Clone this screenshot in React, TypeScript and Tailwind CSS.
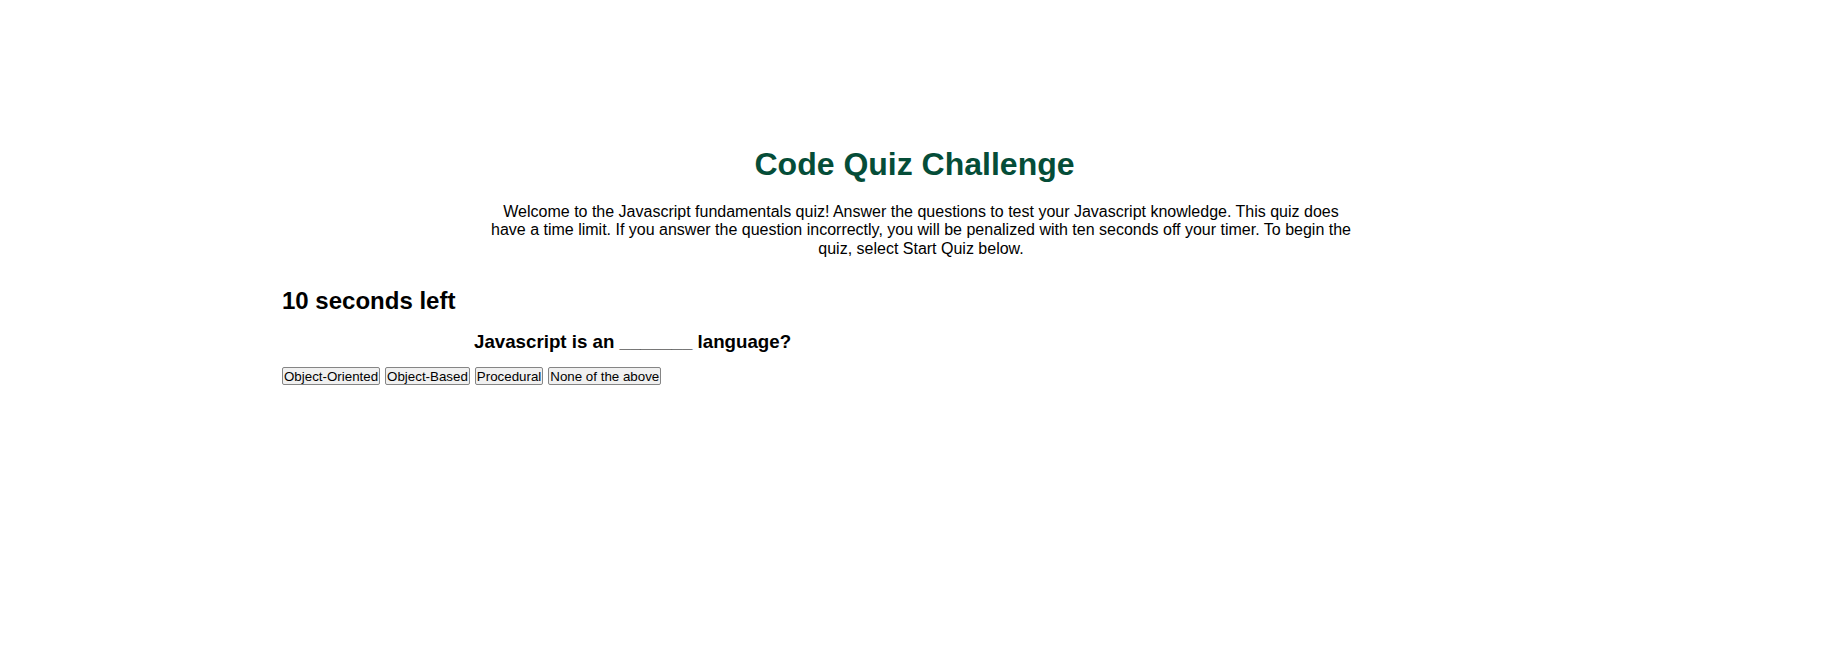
import React from "react";

export default function App() {
  const options = ["Object-Oriented", "Object-Based", "Procedural", "None of the above"];
  return (
    <div className="min-h-[655px] w-full bg-white text-black" style={{ fontFamily: '"Liberation Sans", Arial, sans-serif' }}>
      <div className="mx-auto w-[1278px] pt-[146px]">
        <h1 className="text-center text-[32px] font-bold leading-[36.8px] text-[#054d38] pr-[13px]">Code Quiz Challenge</h1>
        <p className="mx-auto mt-[20px] w-[874px] text-center text-[16px] leading-[18.4px]">
          Welcome to the Javascript fundamentals quiz! Answer the questions to test your Javascript knowledge. This quiz does have a time limit. If you answer the question incorrectly, you will be penalized with ten seconds off your timer. To begin the quiz, select Start Quiz below.
        </p>
        <h2 className="mt-[29px] text-[24px] font-bold leading-[27.6px]">10 seconds left</h2>
        <h3 className="mt-[16px] pl-[192px] text-[18.72px] font-bold leading-[21.5px]">Javascript is an _______ language?</h3>
        <div className="mt-[15px] flex gap-[5px]">
          {options.map((o) => (
            <button
              key={o}
              className="h-[18px] rounded-[2px] border border-[#858585] bg-[#f0f0f0] px-[1px] py-0 text-[13.33px] leading-[15px] text-black"
            >
              {o}
            </button>
          ))}
        </div>
      </div>
    </div>
  );
}
